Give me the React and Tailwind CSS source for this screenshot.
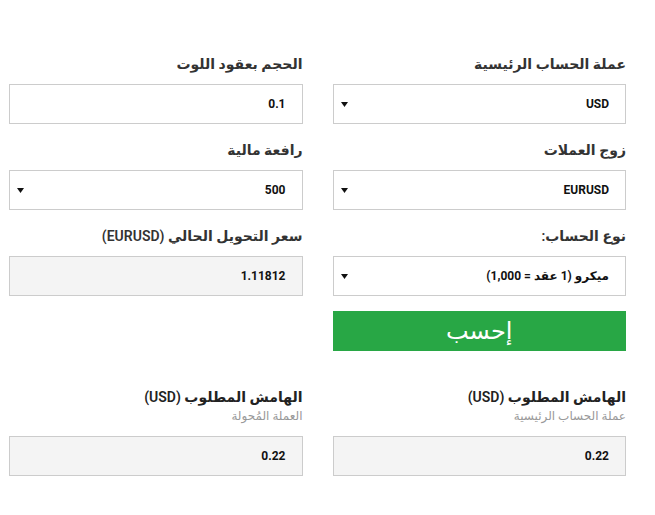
const font = { fontFamily: "Roboto, 'DejaVu Sans', sans-serif" };

function Caret() {
  return (
    <svg width="7" height="5" viewBox="0 0 7 5" className="shrink-0">
      <path d="M0 0h7L3.5 5z" fill="#111" />
    </svg>
  );
}

function Label({ children }) {
  return <div className="mb-[10px] h-5 text-[14px] font-semibold leading-5 text-[#333]">{children}</div>;
}

function SelectField({ label, value }) {
  return (
    <div>
      <Label>{label}</Label>
      <div className="flex h-10 items-center justify-between border border-[#cccccc] bg-white pl-[7px] pr-4 text-[12px] font-bold text-[#111]">
        <span>{value}</span>
        <Caret />
      </div>
    </div>
  );
}

function InputField({ label, value, muted }) {
  return (
    <div>
      <Label>{label}</Label>
      <div
        className={`flex h-10 items-center border border-[#cccccc] pr-4 text-[12px] font-bold text-[#111] ${
          muted ? "bg-[#f4f4f4]" : "bg-white"
        }`}
      >
        {value}
      </div>
    </div>
  );
}

function Result({ sub, value }) {
  return (
    <div>
      <div className="h-5 text-[14px] font-semibold leading-5 text-[#222]">الهامش المطلوب (USD)</div>
      <div className="mb-[11px] h-[18px] text-[12px] leading-[18px] text-[#999]">{sub}</div>
      <div className="flex h-10 items-center border border-[#cccccc] bg-[#f4f4f4] pr-4 text-[12px] font-bold text-[#111]">
        {value}
      </div>
    </div>
  );
}

export default function App() {
  return (
    <div className="min-h-[515px] w-[655px] bg-white" style={font}>
      <div dir="rtl" className="ml-[9px] w-[617px] pt-[54px]">
        <div className="grid grid-cols-2 gap-x-[30px] gap-y-4">
          <SelectField label="عملة الحساب الرئيسية" value="USD" />
          <InputField label="الحجم بعقود اللوت" value="0.1" />
          <SelectField label="زوج العملات" value="EURUSD" />
          <SelectField label="رافعة مالية" value="500" />
          <SelectField label="نوع الحساب:" value="ميكرو (1 عقد = 1,000)" />
          <InputField label="سعر التحويل الحالي (EURUSD)" value="1.11812" muted />
        </div>
        <div className="mt-[15px] grid grid-cols-2 gap-x-[30px]">
          <button className="h-10 bg-[#28a745] text-[24px] leading-10 text-white">إحسب</button>
          <div />
        </div>
        <div className="mt-9 grid grid-cols-2 gap-x-[30px]">
          <Result sub="عملة الحساب الرئيسية" value="0.22" />
          <Result sub="العملة المُحولة" value="0.22" />
        </div>
      </div>
    </div>
  );
}
